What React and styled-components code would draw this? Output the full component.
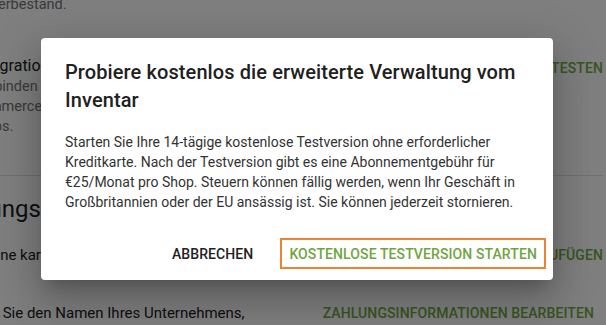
import React from "react";
import styled, { createGlobalStyle } from "styled-components";

const Global = createGlobalStyle`
  html, body { margin: 0; padding: 0; background: #ffffff; }
  body { font-family: Roboto, "Liberation Sans", Arial, sans-serif; overflow: hidden; }
  #root { width: 606px; height: 325px; position: relative; overflow: hidden; }
`;

const Page = styled.div`
  margin: -5px 3px 0 -58px;
  display: flex;
  flex-direction: column;
`;

const Section = styled.section`
  display: flex;
  flex-direction: column;
  padding: ${(p) => p.$pad || "0"};
  border-bottom: ${(p) => (p.$divider ? "1px solid #e0e0e0" : "none")};
`;

const Row = styled.div`
  display: flex;
  justify-content: space-between;
  align-items: ${(p) => p.$align || "center"};
  margin-top: ${(p) => p.$mt || 0}px;
`;

const Col = styled.div`
  display: flex;
  flex-direction: column;
`;

const Secondary = styled.p`
  margin: 0;
  font-size: 14.5px;
  line-height: 20px;
  color: #757575;
  white-space: nowrap;
`;

const RowTitle = styled.h3`
  margin: 0;
  font-size: 16px;
  line-height: 22px;
  font-weight: 400;
  color: #212121;
  white-space: nowrap;
`;

const Heading = styled.h2`
  margin: 0;
  font-size: 24px;
  line-height: 32px;
  font-weight: 400;
  color: #212121;
  white-space: nowrap;
`;

const BodyText = styled.p`
  margin: 0;
  font-size: 15px;
  line-height: 24px;
  color: #212121;
  white-space: nowrap;
`;

const GreenButton = styled.button`
  border: none;
  background: none;
  padding: 6px 0 6px 8px;
  margin-right: ${(p) => p.$mr || 0}px;
  margin-top: ${(p) => p.$mt || 0}px;
  font-family: inherit;
  font-size: 14px;
  font-weight: 500;
  line-height: 24px;
  letter-spacing: 0.1px;
  text-transform: uppercase;
  color: #73aa44;
  white-space: nowrap;
`;

const Overlay = styled.div`
  position: absolute;
  inset: 0;
  background: rgba(0, 0, 0, 0.5);
`;

const Dialog = styled.div`
  position: absolute;
  left: 41px;
  top: 38px;
  width: 512px;
  height: 242px;
  box-sizing: border-box;
  background: #ffffff;
  border-radius: 4px;
  box-shadow: 0 11px 15px -7px rgba(0, 0, 0, 0.2), 0 24px 38px 3px rgba(0, 0, 0, 0.14),
    0 9px 46px 8px rgba(0, 0, 0, 0.12);
  display: flex;
  flex-direction: column;
`;

const DialogTitle = styled.h2`
  margin: 0;
  padding: 20px 24px 0 24px;
  font-size: 20px;
  line-height: 28px;
  font-weight: 500;
  letter-spacing: 0.1px;
  color: #212121;
`;

const DialogContent = styled.p`
  margin: 0;
  padding: 18px 24px 0 24px;
  font-size: 14px;
  line-height: 20px;
  color: #333333;
`;

const Actions = styled.div`
  margin-top: auto;
  display: flex;
  justify-content: flex-end;
  align-items: center;
  gap: 17px;
  padding: 0 7px 11px 8px;
`;

const ActionButton = styled.button`
  background: none;
  box-sizing: border-box;
  height: 31px;
  padding: 0 ${(p) => (p.$outlined ? 7 : 8)}px;
  border: ${(p) => (p.$outlined ? "2px solid #ef8231" : "2px solid transparent")};
  font-family: inherit;
  font-size: 14px;
  font-weight: 500;
  line-height: 24px;
  letter-spacing: 0.1px;
  text-transform: uppercase;
  color: ${(p) => (p.$outlined ? "#6fa53f" : "#222222")};
  white-space: nowrap;
`;

export default function App() {
  return (
    <>
      <Global />
      <Page>
        <Section $pad="0 0 38px 0" $divider>
          <Secondary>dem Lagerbestand.</Secondary>
          <Row $align="flex-start" $mt={40}>
            <Col>
              <RowTitle>Alle Integrationen</RowTitle>
              <Secondary>oder verbinden Sie Ihren Shop</Secondary>
              <Secondary>WooCommerce, Shopify und</Secondary>
              <Secondary>des Shops.</Secondary>
            </Col>
            <GreenButton $mt={-5}>Kostenlos testen</GreenButton>
          </Row>
        </Section>
        <Section $pad="17px 0 0 0">
          <Heading>Zahlungsmethode</Heading>
          <Row $mt={12}>
            <BodyText>Noch keine karte hinterlegt</BodyText>
            <GreenButton>Karte hinzufügen</GreenButton>
          </Row>
          <Row $mt={22}>
            <BodyText>Notieren Sie den Namen Ihres Unternehmens,</BodyText>
            <GreenButton $mr={9}>Zahlungsinformationen bearbeiten</GreenButton>
          </Row>
        </Section>
      </Page>
      <Overlay />
      <Dialog role="dialog">
        <DialogTitle>Probiere kostenlos die erweiterte Verwaltung vom Inventar</DialogTitle>
        <DialogContent>
          Starten Sie Ihre 14-tägige kostenlose Testversion ohne erforderlicher Kreditkarte. Nach
          der Testversion gibt es eine Abonnementgebühr für €25/Monat pro Shop. Steuern können
          fällig werden, wenn Ihr Geschäft in Großbritannien oder der EU ansässig ist. Sie können
          jederzeit stornieren.
        </DialogContent>
        <Actions>
          <ActionButton>Abbrechen</ActionButton>
          <ActionButton $outlined>Kostenlose Testversion starten</ActionButton>
        </Actions>
      </Dialog>
    </>
  );
}
